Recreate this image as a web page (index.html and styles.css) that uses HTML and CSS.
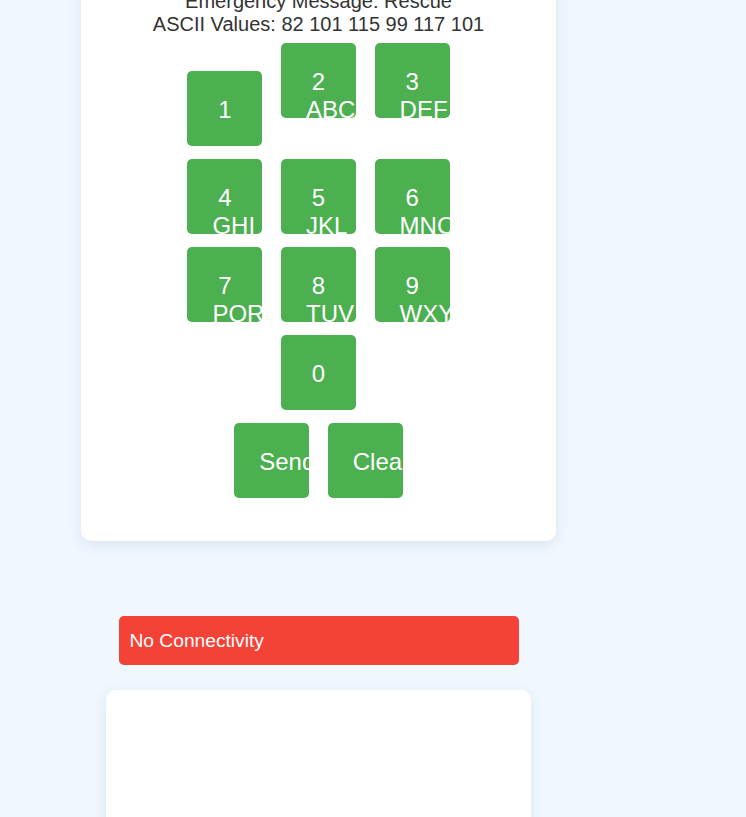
FILE: index.html
```html
<!DOCTYPE html>
<html>
<head>
<meta charset="utf-8">
<link rel="stylesheet" href="styles.css">
</head>
<body>
<div class="page">
  <div class="card">
    <p class="message">Emergency Message: Rescue<br>ASCII Values: 82 101 115 99 117 101</p>
    <div class="keypad">
      <div class="row"><button class="key">1</button> <button class="key">2<br>ABC</button> <button class="key">3<br>DEF</button></div>
      <div class="row"><button class="key">4<br>GHI</button> <button class="key">5<br>JKL</button> <button class="key">6<br>MNO</button></div>
      <div class="row"><button class="key">7<br>PQRS</button> <button class="key">8<br>TUV</button> <button class="key">9<br>WXYZ</button></div>
      <div class="row"><button class="key">0</button></div>
      <div class="row"><button class="key">Send</button> <button class="key">Clear</button></div>
    </div>
  </div>
  <div class="status">No Connectivity</div>
  <div class="card card-lower"></div>
</div>
</body>
</html>
```
FILE: styles.css
```css
html, body {
  margin: 0;
  padding: 0;
  background: #f0f7fe;
  font-family: "Liberation Sans", Arial, sans-serif;
  overflow: hidden;
}
.page {
  width: 637px;
  display: flex;
  flex-direction: column;
  align-items: center;
}
.card {
  width: 475px;
  box-sizing: border-box;
  background: #fff;
  border-radius: 10px;
  box-shadow: 0 4px 14px rgba(40, 70, 120, 0.10);
  margin-top: -30px;
  padding: 20px 20px 36.5px;
  text-align: center;
  font-size: 20px;
  color: #333;
}
.card-lower {
  width: 425px;
  height: 300px;
  margin-top: 25px;
  padding: 0;
}
.message {
  margin: 0;
  line-height: 23px;
}
.row {
  text-align: center;
}
.key {
  display: inline-block;
  vertical-align: baseline;
  width: 75px;
  height: 75px;
  box-sizing: border-box;
  padding: 25px;
  margin: 6.5px;
  border: none;
  border-radius: 5px;
  background: #4caf50;
  color: #fff;
  font-family: "Liberation Sans", Arial, sans-serif;
  font-size: 24px;
  overflow: clip;
  white-space: nowrap;
  text-align: center;
}
.status {
  width: 400px;
  height: 49px;
  box-sizing: border-box;
  margin-top: 75px;
  padding: 14.5px 11px 0;
  background: #f44336;
  color: #fff;
  border-radius: 5px;
  font-size: 19.2px;
}
```
